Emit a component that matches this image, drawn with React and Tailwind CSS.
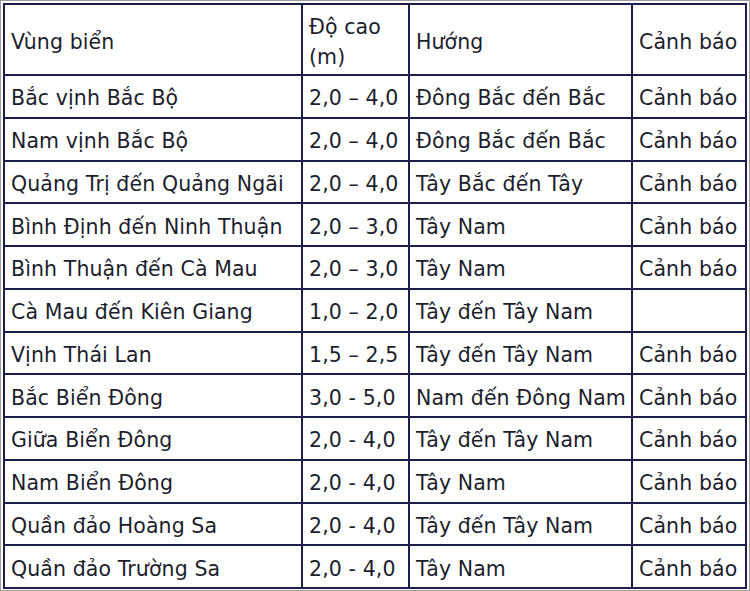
import React from "react";

const rows = [
  ["Bắc vịnh Bắc Bộ", "2,0 – 4,0", "Đông Bắc đến Bắc", "Cảnh báo"],
  ["Nam vịnh Bắc Bộ", "2,0 – 4,0", "Đông Bắc đến Bắc", "Cảnh báo"],
  ["Quảng Trị đến Quảng Ngãi", "2,0 – 4,0", "Tây Bắc đến Tây", "Cảnh báo"],
  ["Bình Định đến Ninh Thuận", "2,0 – 3,0", "Tây Nam", "Cảnh báo"],
  ["Bình Thuận đến Cà Mau", "2,0 – 3,0", "Tây Nam", "Cảnh báo"],
  ["Cà Mau đến Kiên Giang", "1,0 – 2,0", "Tây đến Tây Nam", ""],
  ["Vịnh Thái Lan", "1,5 – 2,5", "Tây đến Tây Nam", "Cảnh báo"],
  ["Bắc Biển Đông", "3,0 - 5,0", "Nam đến Đông Nam", "Cảnh báo"],
  ["Giữa Biển Đông", "2,0 - 4,0", "Tây đến Tây Nam", "Cảnh báo"],
  ["Nam Biển Đông", "2,0 - 4,0", "Tây Nam", "Cảnh báo"],
  ["Quần đảo Hoàng Sa", "2,0 - 4,0", "Tây đến Tây Nam", "Cảnh báo"],
  ["Quần đảo Trường Sa", "2,0 - 4,0", "Tây Nam", "Cảnh báo"],
];

const cell = "border-2 border-[#1b1d4b] pl-[6px] pr-0 pt-[4px] align-middle whitespace-nowrap";

export default function App() {
  return (
    <div className="w-[750px] h-[591px] overflow-hidden bg-white border border-[#9c9c9c] pt-[2px] pl-[2px]">
      <table
        className="table-fixed border-collapse w-[742px] text-[#1d1e2c] text-[20.5px] leading-[30px] tracking-[0.1px]"
        style={{ fontFamily: '"DejaVu Sans", Verdana, sans-serif' }}
      >
        <colgroup>
          <col className="w-[298px]" />
          <col className="w-[107px]" />
          <col className="w-[223px]" />
          <col className="w-[114px]" />
        </colgroup>
        <thead>
          <tr className="h-[71px]">
            <td className={cell}>Vùng biển</td>
            <td className={`${cell} whitespace-normal`}>
              Độ cao
              <br />
              (m)
            </td>
            <td className={cell}>Hướng</td>
            <td className={cell}>Cảnh báo</td>
          </tr>
        </thead>
        <tbody>
          {rows.map((r, i) => (
            <tr key={i} className="h-[42.75px]">
              <td className={cell}>{r[0]}</td>
              <td className={cell}>{r[1]}</td>
              <td className={cell}>{r[2]}</td>
              <td className={cell}>{r[3]}</td>
            </tr>
          ))}
        </tbody>
      </table>
    </div>
  );
}
